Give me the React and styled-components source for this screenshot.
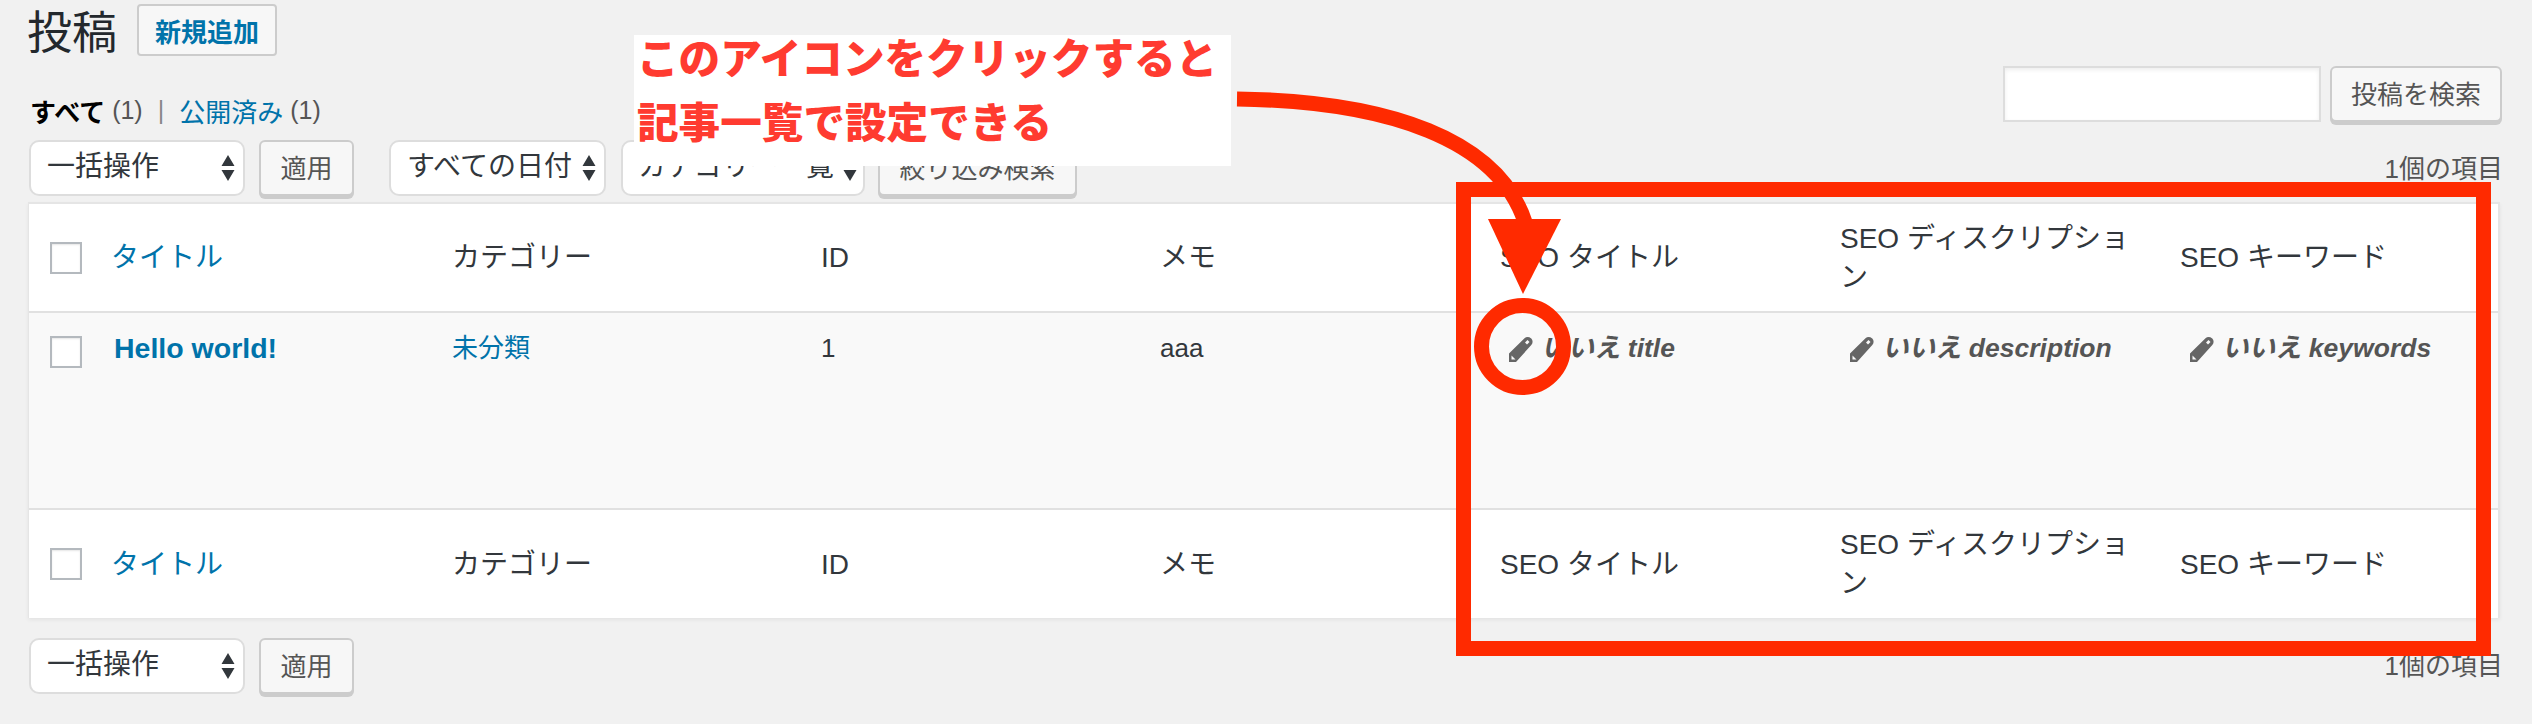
import React from "react";
import styled, { createGlobalStyle } from "styled-components";

const Global = createGlobalStyle`
  html, body { margin: 0; padding: 0; background: #f1f1f1; }
  body { font-family: "Liberation Sans", "Noto Sans CJK JP", sans-serif; color: #32373c; font-size: 26px; }
  * { box-sizing: border-box; }
`;

const Page = styled.div`
  position: relative;
  width: 2532px;
  height: 724px;
  overflow: hidden;
  padding: 4px 31px 0 28px;
`;
const TitleRow = styled.div`
  display: flex;
  align-items: flex-start;
  gap: 20px;
  height: 62px;
`;
const Heading = styled.h1`
  margin: 0 0 0 -1px;
  font-size: 45px;
  font-weight: 400;
  line-height: 52px;
  height: 54px;
  color: #23282d;
  font-family: "Noto Sans CJK JP", sans-serif;
`;
const AddButton = styled.a`
  display: flex;
  align-items: center;
  justify-content: center;
  width: 140px;
  height: 52px;
  background: #f7f7f7;
  border: 2px solid #ccc;
  border-radius: 4px;
  color: #0073aa;
  font-weight: 700;
  font-size: 26px;
`;
const MiddleRow = styled.div`
  display: flex;
  justify-content: space-between;
  height: 74px;
`;
const Views = styled.div`
  display: flex;
  align-items: center;
  gap: 7px;
  height: 26px;
  margin: 31px 0 0 2px;
  color: #555;
  font-size: 25px;
`;
const Strong = styled.b` color: #000; font-size: 26px; `;
const Sep = styled.span` color: #888; margin: 0 8px; `;
const Link = styled.a`
  color: #0073aa;
  font-size: ${p => p.$size}px;
  font-weight: ${p => (p.$bold ? 700 : 400)};
  margin-left: ${p => p.$indent || 0}px;
`;
const ViewLink = styled.a`
  color: #0073aa;
  font-size: 26px;
`;
const SearchBox = styled.div`
  display: flex;
  gap: 9px;
  margin-right: -1px;
`;
const SearchInput = styled.div`
  width: 318px;
  height: 56px;
  background: #fff;
  border: 2px solid #ddd;
  box-shadow: inset 0 2px 4px rgba(0,0,0,.07);
`;
const Button = styled.div`
  display: flex;
  align-items: center;
  justify-content: center;
  width: ${p => p.$w}px;
  height: 56px;
  padding-bottom: 3px;
  background: #f7f7f7;
  border: 2px solid #ccc;
  border-radius: 6px;
  box-shadow: 0 3px 0 #ccc;
  color: #555;
  font-size: 26px;
  flex: none;
`;
const Toolbar = styled.div`
  display: flex;
  align-items: flex-start;
  height: ${p => p.$h}px;
  margin-top: ${p => p.$top || 0}px;
`;
const Select = styled.div`
  position: relative;
  display: flex;
  align-items: center;
  width: ${p => p.$w}px;
  height: 56px;
  margin-left: ${p => p.$left || 0}px;
  margin-right: ${p => p.$right || 0}px;
  padding: 0 0 8px ${p => p.$pad}px;
  background: #fff;
  border: 2px solid #ddd;
  border-radius: 10px;
  color: #32373c;
  font-size: 28px;
  white-space: nowrap;
  flex: none;
`;
const Arrows = styled.svg`
  position: absolute;
  right: ${p => p.$r}px;
  top: 13px;
`;
const Count = styled.div`
  margin-left: auto;
  margin-right: -2px;
  margin-top: ${p => p.$top}px;
  color: #555;
  font-size: 26px;
  line-height: 28px;
`;
const Table = styled.div`
  width: 2472px;
  background: #fff;
  border: 2px solid #e5e5e5;
  border-left-width: 1px;
  border-bottom: 0;
  box-shadow: 0 2px 4px rgba(0,0,0,.06);
`;
const Row = styled.div`
  display: grid;
  grid-template-columns: 82px 341px 369px 339px 340px 340px 340px 1fr;
  align-items: ${p => (p.$body ? "start" : "center")};
  height: ${p => p.$h}px;
  background: ${p => (p.$body ? "#f9f9f9" : "#fff")};
  border-bottom: ${p => (p.$line ? "2px solid #e1e1e1" : "0")};
  padding-top: ${p => p.$pt || 0}px;
`;
const Cell = styled.div`
  padding-right: 44px;
  font-size: ${p => (p.$data ? 26 : 28)}px;
  line-height: 39px;
  color: #32373c;
`;
const Check = styled.span`
  display: block;
  width: 32px;
  height: 32px;
  margin-left: 21px;
  margin-top: ${p => p.$top || 0}px;
  background: #fff;
  border: 2px solid #b4b9be;
  box-shadow: inset 0 1px 2px rgba(0,0,0,.1);
`;
const Meta = styled.span`
  display: flex;
  align-items: center;
  gap: 8px;
  margin-left: ${p => p.$left}px;
  color: #555;
  font-weight: 700;
  font-style: italic;
  font-size: 26.5px;
  white-space: nowrap;
`;
const Overlay = styled.svg`
  position: absolute;
  left: 0;
  top: 0;
  pointer-events: none;
`;
const Note = styled.div`
  position: absolute;
  left: 634px;
  top: 35px;
  width: 597px;
  height: 131px;
  padding-left: 3px;
  background: #fff;
  color: #ff3b30;
  font-family: "Noto Sans CJK JP", sans-serif;
  font-weight: 900;
  font-size: 41.6px;
  line-height: 64px;
  white-space: nowrap;
`;
const NoteText = styled.div`
  margin-top: -11px;
`;

const UpDown = ({ r }) => (
  <Arrows $r={r} width="14" height="26" viewBox="0 0 14 26">
    <path d="M7 0L13.5 11H.5ZM.5 15H13.5L7 26Z" fill="#32373c" />
  </Arrows>
);
const Down = ({ r }) => (
  <Arrows $r={r} width="14" height="26" viewBox="0 0 14 26">
    <path d="M.5 15H13.5L7 26Z" fill="#32373c" />
  </Arrows>
);
const Pencil = () => (
  <svg width="25" height="26" viewBox="0 0 25 26" style={{ flex: "none" }}>
    <path d="M1 26V17.5L16.5 2.2a4.6 4.6 0 0 1 6.4 0l.4.4a4.6 4.6 0 0 1 0 6.4L8 26Z" fill="#666" />
    <path d="M17 6.5l2.5-2.5 2 2-2.5 2.5ZM3.5 23.5v-4l4 4Z" fill="#f9f9f9" />
  </svg>
);

const HeadCells = () => (
  <>
    <Check />
    <Cell><Link $size={28}>タイトル</Link></Cell>
    <Cell>カテゴリー</Cell>
    <Cell>ID</Cell>
    <Cell>メモ</Cell>
    <Cell>SEO タイトル</Cell>
    <Cell>SEO ディスクリプション</Cell>
    <Cell>SEO キーワード</Cell>
  </>
);

export default function App() {
  return (
    <Page lang="ja">
      <Global />
      <TitleRow>
        <Heading>投稿</Heading>
        <AddButton>新規追加</AddButton>
      </TitleRow>
      <MiddleRow>
        <Views>
          <Strong>すべて</Strong> (1) <Sep>|</Sep> <ViewLink>公開済み</ViewLink> (1)
        </Views>
        <SearchBox>
          <SearchInput />
          <Button $w={172}>投稿を検索</Button>
        </SearchBox>
      </MiddleRow>
      <Toolbar $h={62}>
        <Select $w={216} $left={1} $right={14} $pad={16}>一括操作<UpDown r={8} /></Select>
        <Button $w={95}>適用</Button>
        <Select $w={217} $left={35} $pad={16}>すべての日付<UpDown r={8} /></Select>
        <Select $w={244} $left={15} $right={13} $pad={15}>カテゴリー一覧<Down r={6} /></Select>
        <Button $w={199}>絞り込み検索</Button>
        <Count $top={15}>1個の項目</Count>
      </Toolbar>
      <Table>
        <Row $h={109} $line><HeadCells /></Row>
        <Row $h={197} $line $body $pt={16}>
          <Check $top={7} />
          <Cell><Link $bold $size={28.5} $indent={3}>Hello world!</Link></Cell>
          <Cell $data><Link $size={26}>未分類</Link></Cell>
          <Cell $data>1</Cell>
          <Cell $data>aaa</Cell>
          <Cell><Meta $left={8}><Pencil />いいえ title</Meta></Cell>
          <Cell><Meta $left={9}><Pencil />いいえ description</Meta></Cell>
          <Cell><Meta $left={9}><Pencil />いいえ keywords</Meta></Cell>
        </Row>
        <Row $h={108}><HeadCells /></Row>
      </Table>
      <Toolbar $h={60} $top={20}>
        <Select $w={216} $left={1} $right={14} $pad={16}>一括操作<UpDown r={8} /></Select>
        <Button $w={95}>適用</Button>
        <Count $top={14}>1個の項目</Count>
      </Toolbar>

      <Note><NoteText>このアイコンをクリックすると<br />記事一覧で設定できる</NoteText></Note>
      <Overlay width="2532" height="724" viewBox="0 0 2532 724">
        <path d="M1237 99C1390 101 1498 140 1525 222" fill="none" stroke="#ff2a00" strokeWidth="15" />
        <path d="M1488 219H1561L1523 294Z" fill="#ff2a00" />
        <rect x="1463.5" y="189.5" width="1020" height="459" fill="none" stroke="#ff2a00" strokeWidth="15" />
        <circle cx="1522.5" cy="346.5" r="41" fill="none" stroke="#ff2a00" strokeWidth="15" />
      </Overlay>
    </Page>
  );
}
